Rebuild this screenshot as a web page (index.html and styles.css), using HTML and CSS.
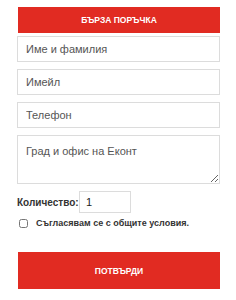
FILE: index.html
```html
<!DOCTYPE html>
<html>
<head>
<meta charset="utf-8">
<link rel="stylesheet" href="styles.css">
</head>
<body>
<form class="order">
  <div class="title">БЪРЗА ПОРЪЧКА</div>
  <input class="field" type="text" placeholder="Име и фамилия">
  <input class="field" type="text" placeholder="Имейл">
  <input class="field" type="text" placeholder="Телефон">
  <textarea class="field area" placeholder="Град и офис на Еконт"></textarea>
  <div class="qty">
    <label class="qty-label">Количество:</label>
    <input class="qty-input" type="text" value="1">
  </div>
  <label class="agree">
    <input class="check" type="checkbox">
    <span>Съгласявам се с общите условия.</span>
  </label>
  <button class="submit" type="button">ПОТВЪРДИ</button>
</form>
</body>
</html>
```
FILE: styles.css
```css
html, body {
  margin: 0;
  padding: 0;
  background: #fff;
}
body {
  font-family: "Liberation Sans", Arial, sans-serif;
}
.order {
  display: flex;
  flex-direction: column;
  width: 203px;
  padding: 7px 0 0 17px;
}
.title {
  margin-left: 1px;
  height: 26px;
  background: #e12b22;
  color: #fff;
  font-weight: bold;
  font-size: 8.5px;
  line-height: 26px;
  text-align: center;
  margin-bottom: 3px;
}
.field {
  box-sizing: border-box;
  width: 203px;
  height: 26px;
  border: 1px solid #dcdcdc;
  padding: 0 8px;
  margin: 0 0 7px 0;
  font-family: "Liberation Sans", Arial, sans-serif;
  font-size: 11px;
  color: #333;
  outline: none;
  border-radius: 0;
}
.field::placeholder {
  color: #555;
}
.area {
  height: 49px;
  padding: 9px 8px;
  resize: vertical;
}
.qty {
  display: flex;
  align-items: center;
}
.qty-label {
  font-weight: bold;
  font-size: 10px;
  color: #333;
  width: 62px;
  white-space: nowrap;
}
.qty-input {
  box-sizing: border-box;
  width: 52px;
  height: 22px;
  border: 1px solid #dcdcdc;
  padding: 0 6px;
  font-family: "Liberation Sans", Arial, sans-serif;
  font-size: 11px;
  color: #222;
  outline: none;
}
.agree {
  display: flex;
  align-items: center;
  margin-top: 5px;
  font-size: 9px;
  font-weight: bold;
  color: #333;
  white-space: nowrap;
}
.check {
  width: 9px;
  height: 9px;
  margin: 0 8px 0 2px;
}
.submit {
  margin: 24px 0 0 1px;
  height: 37px;
  border: none;
  background: #e12b22;
  color: #fff;
  font-family: "Liberation Sans", Arial, sans-serif;
  font-weight: bold;
  font-size: 8.5px;
  border-radius: 0;
}
```
